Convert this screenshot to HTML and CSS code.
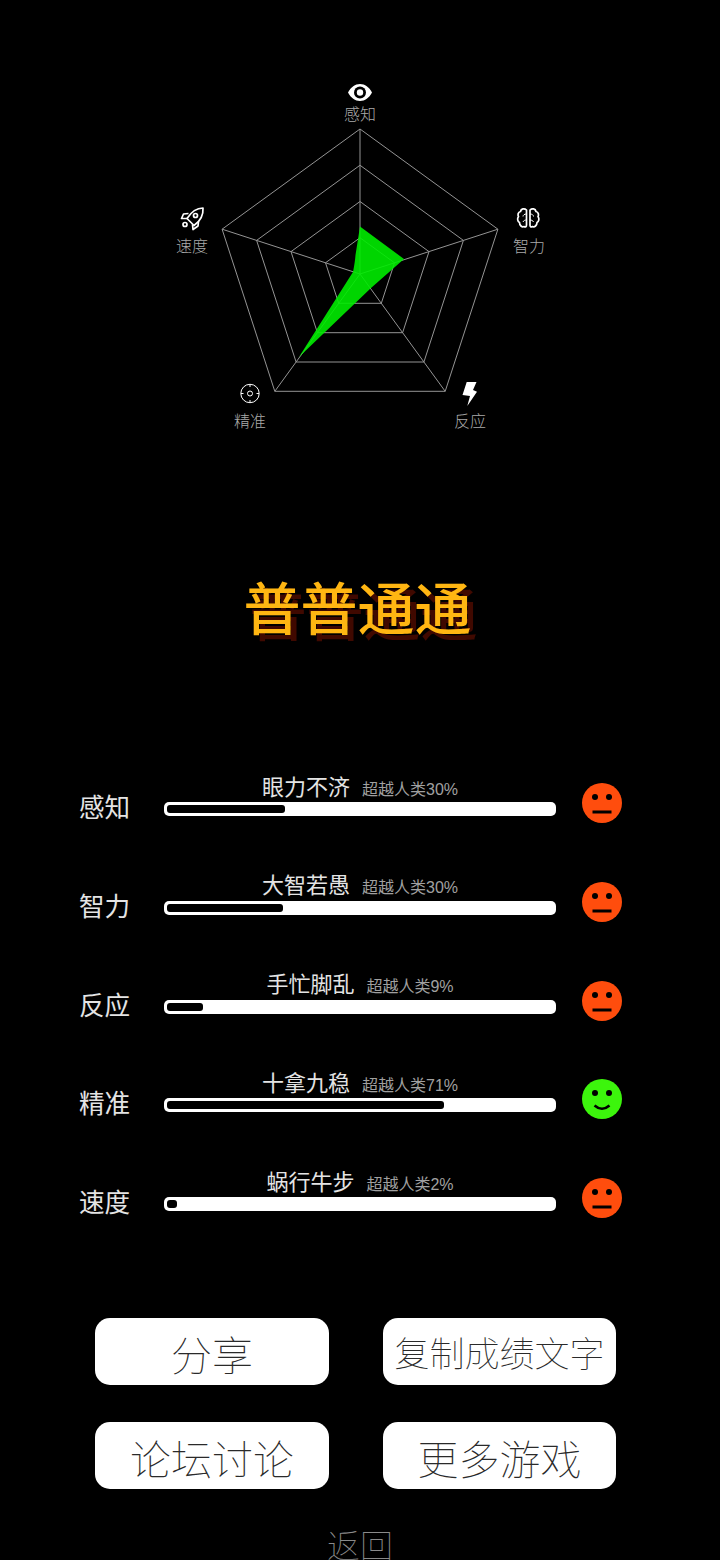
FILE: index.html
```html
<!DOCTYPE html>
<html lang="zh-CN">
<head>
<meta charset="utf-8">
<title>普普通通</title>
<link rel="stylesheet" href="styles.css">
</head>
<body>
<main class="page">
  <section class="radar">
    <svg class="radar-svg" width="720" height="480" viewBox="0 0 720 480">
      <g class="grid">
        <polygon points="360,129 497.9,229.2 445.2,391.3 274.8,391.3 222.1,229.2"/>
        <polygon points="360,165.25 463.4,240.4 423.9,362 296.1,362 256.6,240.4"/>
        <polygon points="360,201.5 429,251.6 402.6,332.7 317.4,332.7 291,251.6"/>
        <polygon points="360,237.75 394.5,262.8 381.3,303.3 338.7,303.3 325.5,262.8"/>
        <line x1="360" y1="274" x2="360" y2="129"/>
        <line x1="360" y1="274" x2="497.9" y2="229.2"/>
        <line x1="360" y1="274" x2="445.2" y2="391.3"/>
        <line x1="360" y1="274" x2="274.8" y2="391.3"/>
        <line x1="360" y1="274" x2="222.1" y2="229.2"/>
      </g>
      <path class="data" d="M360 226.5 L404 259 L371 288 L299 357 L353 272 Q355 262 355.5 255 Z"/>
      <g class="icon-fill">
        <path d="M348 92.5 C351 87 355 84 360 84 C365 84 369 87 372 92.5 C369 98 365 101 360 101 C355 101 351 98 348 92.5 Z"/>
        <circle class="eye-ring" cx="360" cy="92.5" r="6"/>
        <circle cx="360" cy="92.5" r="3.2"/>
        <polygon points="466.7,382 476.5,382 473,390 477,391.7 467.3,406 470,396 462.5,395"/>
      </g>
      <g class="icon-line">
        <path d="M203 208 C197 208 191.5 211.5 187 218.5 L194 225.5 C200.5 221 203.5 215 203 208 Z"/>
        <path d="M188.5 213.5 L183.5 214 L181.5 218.5 L187.5 218.5"/>
        <path d="M198.5 221.5 L198 226 L193 229.5 L192.5 224.5"/>
        <circle cx="195.5" cy="215.5" r="2"/>
        <circle cx="185" cy="224.5" r="2"/>
        <path d="M526.5 210 C524.5 208 521 208.5 520.5 211.5 C518 212 517.5 215 518.5 216.5 C517 218.5 517.5 221.5 519.5 222.5 C519.5 225.5 522 227.5 524 226.5 C525.5 227.5 526.5 226.5 526.5 225 Z"/>
        <path d="M530 210 C532 208 535.5 208.5 536 211.5 C538.5 212 539 215 538 216.5 C539.5 218.5 539 221.5 537 222.5 C537 225.5 534.5 227.5 532.5 226.5 C531 227.5 530 226.5 530 225 Z"/>
        <path class="thin" d="M526.5 214 C524.5 214 523 215 523 216.5 M530 214 C532 214 533.5 215 533.5 216.5 M526.5 220 C525 220 523.5 220.5 523 222 M530 220 C531.5 220 533 220.5 533.5 222"/>
        <circle class="thin" cx="250" cy="393.5" r="9.2"/>
        <circle class="thin" cx="250" cy="393.5" r="2.5"/>
        <path class="thin" d="M250 384.5 V387 M250 400 V402.5 M241 393.5 H243.5 M256.5 393.5 H259"/>
      </g>
      <g class="axis-label">
        <text x="360" y="120">感知</text>
        <text x="529" y="252">智力</text>
        <text x="470" y="427">反应</text>
        <text x="250" y="427">精准</text>
        <text x="192" y="252">速度</text>
      </g>
    </svg>
  </section>

  <h1 class="title">普普通通</h1>

  <section class="stats">
    <div class="stat">
      <div class="stat-name">感知</div>
      <div class="stat-main">
        <div class="caption"><span class="rank">眼力不济</span><span class="beat">超越人类30%</span></div>
        <div class="track"><div class="fill" style="width:30.6%"></div></div>
      </div>
      <svg class="face" width="40" height="40" viewBox="0 0 40 40"><circle class="face-bad" cx="20" cy="20" r="20"/><circle cx="13" cy="14" r="3"/><circle cx="27" cy="14" r="3"/><rect x="10.5" y="27.5" width="19" height="3"/></svg>
    </div>
    <div class="stat">
      <div class="stat-name">智力</div>
      <div class="stat-main">
        <div class="caption"><span class="rank">大智若愚</span><span class="beat">超越人类30%</span></div>
        <div class="track"><div class="fill" style="width:30.1%"></div></div>
      </div>
      <svg class="face" width="40" height="40" viewBox="0 0 40 40"><circle class="face-bad" cx="20" cy="20" r="20"/><circle cx="13" cy="14" r="3"/><circle cx="27" cy="14" r="3"/><rect x="10.5" y="27.5" width="19" height="3"/></svg>
    </div>
    <div class="stat">
      <div class="stat-name">反应</div>
      <div class="stat-main">
        <div class="caption"><span class="rank">手忙脚乱</span><span class="beat">超越人类9%</span></div>
        <div class="track"><div class="fill" style="width:9.3%"></div></div>
      </div>
      <svg class="face" width="40" height="40" viewBox="0 0 40 40"><circle class="face-bad" cx="20" cy="20" r="20"/><circle cx="13" cy="14" r="3"/><circle cx="27" cy="14" r="3"/><rect x="10.5" y="27.5" width="19" height="3"/></svg>
    </div>
    <div class="stat">
      <div class="stat-name">精准</div>
      <div class="stat-main">
        <div class="caption"><span class="rank">十拿九稳</span><span class="beat">超越人类71%</span></div>
        <div class="track"><div class="fill" style="width:71.8%"></div></div>
      </div>
      <svg class="face" width="40" height="40" viewBox="0 0 40 40"><circle class="face-good" cx="20" cy="20" r="20"/><circle cx="13" cy="14" r="3"/><circle cx="27" cy="14" r="3"/><path class="smile" d="M12.5 26.5 Q20 33 27.5 26.5"/></svg>
    </div>
    <div class="stat">
      <div class="stat-name">速度</div>
      <div class="stat-main">
        <div class="caption"><span class="rank">蜗行牛步</span><span class="beat">超越人类2%</span></div>
        <div class="track"><div class="fill" style="width:2.6%"></div></div>
      </div>
      <svg class="face" width="40" height="40" viewBox="0 0 40 40"><circle class="face-bad" cx="20" cy="20" r="20"/><circle cx="13" cy="14" r="3"/><circle cx="27" cy="14" r="3"/><rect x="10.5" y="27.5" width="19" height="3"/></svg>
    </div>
  </section>

  <section class="actions">
    <button class="btn">分享</button>
    <button class="btn btn-long">复制成绩文字</button>
    <button class="btn">论坛讨论</button>
    <button class="btn">更多游戏</button>
  </section>

  <div class="back">返回</div>
</main>
</body>
</html>
```

FILE: styles.css
```css
* { box-sizing: border-box; }
html, body { margin: 0; padding: 0; background: #000; }
body { font-family: "Liberation Sans", "Noto Sans CJK SC", sans-serif; }

.page {
  width: 720px;
  height: 1560px;
  overflow: hidden;
  background: #000;
  display: flex;
  flex-direction: column;
}

.radar { height: 480px; flex: none; }
.radar-svg { display: block; }

.grid polygon, .grid line { fill: none; stroke: #949494; stroke-width: 1; }
.data { fill: #00ec00; fill-opacity: 0.9; }
.icon-fill { fill: #fff; }
.icon-fill .eye-ring { fill: #000; }
.icon-line { fill: none; stroke: #fff; stroke-width: 1.7; stroke-linejoin: round; }
.icon-line .thin { stroke-width: 1; }
.axis-label text {
  fill: #aaa;
  font-size: 16px;
  font-weight: 300;
  text-anchor: middle;
}

.title {
  margin: 0;
  height: 262px;
  flex: none;
  display: flex;
  align-items: center;
  justify-content: center;
  padding: 0 5px 12px 0;
  font-size: 57px;
  font-weight: 500;
  color: #ffb612;
  text-shadow: 6px 6px 0 #400900;
}

.stats { flex: none; display: flex; flex-direction: column; padding-top: 28px; }
.stat {
  height: 98.75px;
  flex: none;
  display: flex;
  align-items: flex-start;
  padding-left: 79px;
}
.stat-name {
  width: 85px;
  flex: none;
  margin-top: 19px;
  font-size: 25.6px;
  line-height: 38px;
  color: #e4e4e4;
}
.stat-main { width: 392px; flex: none; }
.caption {
  height: 32px;
  display: flex;
  align-items: center;
  justify-content: center;
  gap: 12px;
}
.rank { font-size: 22px; color: #e4e4e4; margin-bottom: 3px; }
.beat { font-size: 16px; color: #a0a0a0; margin-top: 3px; }
.track {
  height: 14px;
  padding: 3px;
  background: #fff;
  border-radius: 5px;
}
.fill { height: 8px; background: #000; border-radius: 3px; }
.face { flex: none; margin: 13px 0 0 26px; display: block; }
.face-bad { fill: #ff4d0d; }
.face-good { fill: #3cf50c; }
.smile { fill: none; stroke: #000; stroke-width: 2.5; }

.actions {
  flex: none;
  display: grid;
  grid-template-columns: 234px 233px;
  column-gap: 54px;
  row-gap: 37px;
  padding-left: 95px;
  margin-top: 54px;
}
.btn {
  height: 67px;
  padding: 3px 0 0;
  border: 0;
  border-radius: 15px;
  background: #fff;
  color: #2a2a2a;
  font-family: inherit;
  font-size: 41px;
  font-weight: 100;
}
.btn-long { font-size: 35px; padding-top: 0; }

.back {
  flex: none;
  margin-top: 36px;
  text-align: center;
  font-size: 33px;
  line-height: 44px;
  font-weight: 100;
  color: #8a8a8a;
}
```
